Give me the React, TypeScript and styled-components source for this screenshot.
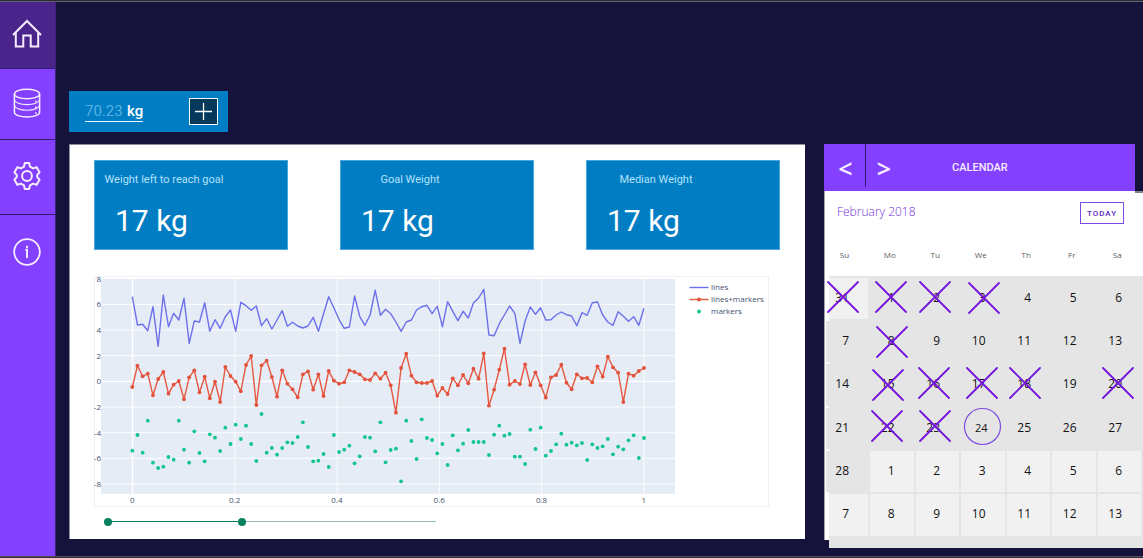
import React, { useState } from "react";
import styled, { createGlobalStyle } from "styled-components";

const GlobalStyle = createGlobalStyle`
  * { box-sizing: border-box; }
  body { margin: 0; background: #15133c; font-family: Roboto, sans-serif; }
  button, input { font-family: inherit; }
`;

const Page = styled.div`
  display: flex;
  min-height: 100vh;
  background: #15133c;
  border-top: 1px solid #2b2935;
  border-bottom: 1px solid #2b2935;
  overflow-x: hidden;
`;

const Sidebar = styled.nav`
  flex: none;
  width: 56px;
  background: #8440ff;
  border-top: 1px solid #66646f;
  border-bottom: 1px solid #55535e;
  border-right: 1px solid #3c2379;
`;

const NavButton = styled.button<{ $height: number; $active?: boolean }>`
  display: flex;
  align-items: center;
  justify-content: center;
  width: 100%;
  height: ${(p) => p.$height}px;
  padding: 0 2px 2px 0;
  border: 0;
  border-bottom: 1px solid ${(p) => (p.$height > 75 ? "transparent" : "#351a73")};
  background: ${(p) => (p.$active ? "#48248b" : "transparent")};
  color: #f8edff;
`;

const Content = styled.main`
  flex: 1;
  min-width: 0;
  border-top: 1px solid #66646f;
  border-bottom: 1px solid #55535e;
  padding: 89px 0 8px 13px;
`;

const EntryBar = styled.form`
  display: flex;
  align-items: center;
  justify-content: space-between;
  width: 159px;
  height: 41px;
  padding: 0 10px 0 16px;
  background: #007dc3;
`;

const WeightField = styled.label`
  display: flex;
  gap: 4px;
  width: 58px;
  border-bottom: 1px solid #e6f6ff;
  color: #fff;
  font-size: 15px;
  font-weight: 500;
  line-height: 20px;
`;

const WeightInput = styled.input`
  width: 38px;
  height: 20px;
  padding: 0;
  border: 0;
  background: transparent;
  color: #fff;
  font-size: 15px;
  &::placeholder { color: #55b1e4; opacity: 1; }
`;

const AddButton = styled.button`
  display: flex;
  align-items: center;
  justify-content: center;
  width: 29px;
  height: 27px;
  padding: 0;
  border: 1px solid #f2fbff;
  background: #04395b;
  color: #fff;
`;

const Columns = styled.div`
  display: flex;
  align-items: flex-start;
  gap: 19px;
  margin-top: 12px;
`;

const Dashboard = styled.section`
  flex: 1;
  min-width: 0;
  padding: 15px 25px 10px 24px;
  border-top: 1px solid #8f8d9b;
  border-left: 1px solid #8f8d9b;
  background: #fff;
`;

const Cards = styled.div`
  display: grid;
  grid-template-columns: repeat(3, 1fr);
  gap: 52px;
`;

const Card = styled.div`
  height: 90px;
  padding-top: 11px;
  border: 1px solid #4aa6dc;
  background: #007dc3;
`;

const CardTitle = styled.div`
  width: 138px;
  color: #b4e1fc;
  font-size: 11px;
  line-height: 16px;
  text-align: center;
`;

const CardValue = styled.div`
  padding: 15px 0 0 20px;
  color: #fff;
  font-size: 30px;
  line-height: 36px;
`;

const ChartFrame = styled.div`
  margin: 26px 11px 0 0;
  svg { display: block; width: 100%; height: auto; overflow: visible; }
  text { font-family: "Open Sans", sans-serif; font-size: 8px; fill: #44526f; }
`;

const RangeSlider = styled.div`
  position: relative;
  width: 336px;
  height: 14px;
  margin: 8px 0 0 10px;
`;

const Track = styled.div`
  position: absolute;
  top: 6px;
  right: 4px;
  left: 4px;
  height: 1px;
  background: #95bdb5;
`;

const TrackFill = styled.div`
  height: 1px;
  background: #0a7c5f;
`;

const RangeInput = styled.input`
  position: absolute;
  inset: 0;
  width: 100%;
  height: 14px;
  margin: 0;
  appearance: none;
  background: transparent;
  pointer-events: none;
  &::-webkit-slider-thumb {
    appearance: none;
    width: 8px;
    height: 8px;
    border-radius: 50%;
    background: #06805f;
    pointer-events: auto;
  }
`;

const Calendar = styled.section`
  flex: none;
  width: 319px;
`;

const CalendarHeader = styled.header`
  display: flex;
  width: 311px;
  height: 47px;
  background: #8440ff;
`;

const StepButton = styled.button<{ $divided?: boolean }>`
  width: ${(p) => (p.$divided ? 42 : 36)}px;
  height: 43px;
  padding: ${(p) => (p.$divided ? "4px 0 0 2px" : "4px 0 0")};
  border: 0;
  border-right: ${(p) => (p.$divided ? "1px solid #35176f" : "0")};
  background: transparent;
  color: #f8edff;
  font-family: "Open Sans", sans-serif;
  font-size: 25px;
  font-weight: 600;
  line-height: 36px;
`;

const CalendarTitle = styled.h2`
  margin: 0 0 0 50px;
  color: #f8edff;
  font-size: 11px;
  font-weight: 500;
  line-height: 48px;
`;

const CalendarBody = styled.div`
  position: relative;
  display: flow-root;
  border-left: 1px solid #a3a1ad;
  background: #fff;
  &::after {
    content: "";
    position: absolute;
    top: 0;
    right: 0;
    width: 8px;
    height: 2px;
    background: #85828f;
  }
`;

const MonthRow = styled.div`
  display: flex;
  align-items: center;
  justify-content: space-between;
  height: 44px;
  padding: 0 19px 0 12px;
`;

const Month = styled.h3`
  margin: 0 0 3px;
  color: #7230dc;
  font-family: "Open Sans", sans-serif;
  font-size: 12px;
  font-weight: 300;
`;

const TodayButton = styled.button`
  width: 44px;
  height: 22px;
  padding: 0;
  border: 1px solid #7c4be6;
  background: #fff;
  color: #5a1fc0;
  font-size: 8px;
  font-weight: 500;
  letter-spacing: 1px;
`;

const GridWrap = styled.div`
  position: relative;
  margin: 0 0 -8px 4px;
  padding-bottom: 12px;
  background: #e5e5e5;
`;

const Grid = styled.table`
  width: 100%;
  table-layout: fixed;
  border-collapse: separate;
  border-spacing: 0;
  font-family: "Open Sans", sans-serif;
`;

const Weekday = styled.th`
  height: 41px;
  padding: 0 6px 2px 0;
  background: #fff;
  color: #5a5a5a;
  font-size: 8px;
  font-weight: 400;
  text-align: center;
  &:first-child { width: 41px; padding-right: 10px; }
`;

const Week = styled.tr`
  height: 43px;
  &:nth-child(3n) { height: 44px; }
`;

const Day = styled.td<{ $light?: boolean; $wide?: boolean; $current?: boolean }>`
  position: relative;
  padding: 0 ${(p) => (p.$current ? 17 : 19)}px 2px 0;
  border-top: 2px solid #e5e5e5;
  border-right: 2px solid #e5e5e5;
  background: ${(p) => (p.$light ? "#f1f1f1" : "#e5e5e5")};
  color: #111;
  font-size: ${(p) => (p.$current ? 11 : 12)}px;
  line-height: 16px;
  text-align: right;
  &::before {
    content: "";
    display: ${(p) => (p.$wide ? "block" : "none")};
    position: absolute;
    top: 0;
    bottom: 0;
    left: -3px;
    width: 3px;
    background: #e5e5e5;
  }
`;

const Marks = styled.svg`
  position: absolute;
  top: 41px;
  left: 0;
  overflow: visible;
  pointer-events: none;
`;

const LINES = [
  95, 180, 178, 197, 125, 244, 90, 185, 145, 165, 100, 235, 168, 171, 113, 199, 164, 190, 155, 135,
  199, 112, 122, 136, 123, 182, 161, 192, 165, 137, 184, 172, 183, 189, 183, 157, 199, 147, 95, 129,
  163, 190, 186, 93, 154, 181, 150, 76, 151, 133, 146, 171, 199, 171, 165, 135, 125, 121, 146, 124,
  185, 110, 139, 167, 139, 159, 114, 99, 73, 210, 212, 176, 150, 123, 145, 235, 168, 126, 148, 128,
  165, 164, 150, 141, 149, 153, 182, 143, 151, 113, 111, 150, 171, 181, 140, 154, 169, 155, 181, 130,
];
const LINES_MARKERS = [
  366, 302, 334, 326, 391, 342, 321, 386, 359, 348, 403, 337, 316, 382, 335, 400, 350, 411, 306, 333,
  350, 379, 300, 273, 420, 301, 287, 336, 395, 316, 356, 373, 397, 328, 319, 374, 328, 393, 318, 347,
  356, 352, 316, 321, 328, 343, 345, 325, 341, 323, 361, 443, 309, 266, 332, 352, 354, 354, 348, 392,
  369, 387, 340, 361, 330, 355, 311, 341, 265, 422, 374, 314, 251, 359, 348, 357, 298, 360, 322, 361,
  398, 337, 330, 299, 353, 373, 328, 340, 339, 352, 304, 335, 275, 307, 323, 411, 326, 332, 318, 309,
];
const MARKERS = [
  152, 105, 158, 62, 188, 204, 200, 171, 179, 62, 149, 188, 94, 159, 184, 103, 113, 153, 83, 132,
  74, 117, 77, 132, 183, 42, 158, 144, 164, 144, 127, 129, 111, 67, 141, 184, 182, 162, 201, 105,
  156, 149, 137, 190, 169, 111, 113, 154, 67, 187, 150, 146, 244, 62, 123, 177, 58, 114, 120, 160,
  132, 195, 106, 151, 131, 90, 126, 126, 126, 165, 104, 77, 107, 102, 170, 170, 192, 89, 147, 83,
  167, 153, 133, 101, 134, 128, 136, 129, 180, 133, 144, 139, 117, 163, 140, 148, 121, 106, 174, 114,
].map((v) => v + 405);

const px = (i: number) => 38.3 + (i * 511.7) / 99;
const py = (v: number) => v / 3 - 11;
const points = (data: number[]) => data.map((v, i) => `${px(i).toFixed(1)},${py(v).toFixed(1)}`).join(" ");

function Chart() {
  return (
    <svg viewBox="0 0 675 231" role="img" aria-label="Weight over time">
      <rect x="0.5" y="0.5" width="674" height="230" fill="#fff" stroke="#f0f1f4" />
      <rect x="7" y="3" width="574" height="215" fill="#e5ecf6" />
      {[0, 1, 2, 3, 4, 5].map((k) => (
        <g key={k}>
          <path d={`M${38.5 + k * 102.3} 3v215`} stroke="#fff" strokeWidth={k === 0 ? 1.4 : 0.9} />
          <text x={38.3 + k * 102.3} y="227" textAnchor="middle">
            {k === 0 ? "0" : k === 5 ? "1" : `0.${k * 2}`}
          </text>
        </g>
      ))}
      {[8, 6, 4, 2, 0, -2, -4, -6, -8].map((v) => (
        <g key={v}>
          {v !== 8 && (
            <path d={`M7 ${105.4 - v * 12.82}h574`} stroke="#fff" strokeWidth={v === 0 ? 1.4 : 0.9} />
          )}
          <text x="7" y={108.4 - v * 12.82} textAnchor="end">{v}</text>
        </g>
      ))}
      <polyline points={points(LINES)} fill="none" stroke="#6c70ea" strokeWidth="1.4" strokeLinejoin="round" />
      <polyline points={points(LINES_MARKERS)} fill="none" stroke="#e8573f" strokeWidth="1.4" strokeLinejoin="round" />
      {LINES_MARKERS.map((v, i) => <circle key={i} cx={px(i)} cy={py(v)} r="1.9" fill="#e2523c" />)}
      {MARKERS.map((v, i) => <circle key={i} cx={px(i)} cy={py(v)} r="1.9" fill="#12c490" />)}
      <path d="M595.5 11.5h19" stroke="#6c70ea" strokeWidth="1.4" />
      <path d="M595.5 23.5h19" stroke="#e8573f" strokeWidth="1.4" />
      <circle cx="605" cy="23.5" r="1.9" fill="#e2523c" />
      <circle cx="605" cy="35.5" r="1.9" fill="#12c490" />
      <text x="617" y="14">lines</text>
      <text x="617" y="26">lines+markers</text>
      <text x="617" y="38">markers</text>
    </svg>
  );
}

const HomeIcon = () => (
  <svg width="30" height="30" viewBox="0 0 30 30" fill="none" stroke="currentColor" strokeWidth="2">
    <path d="M1 16L15 2L29 16" />
    <path d="M3.8 14V27.6H11.3V16.6H18.7V27.6H26.2V14" />
  </svg>
);

const DatabaseIcon = () => (
  <svg width="28" height="30" viewBox="0 0 28 30" fill="none" stroke="currentColor" strokeWidth="1.5">
    <ellipse cx="14" cy="6" rx="12.6" ry="4.8" />
    <path d="M1.4 6V24.2C1.4 27 7 29 14 29S26.6 27 26.6 24.2V6" />
    <path d="M1.4 12C3 15 8 16.6 14 16.6S25 15 26.6 12M1.4 17.6C3 20.8 8 22.3 14 22.3S25 20.8 26.6 17.6" strokeWidth="1.1" />
    <path d="M22 13.6h1.6M22 19.3h1.6M22 25h1.6" strokeWidth="1.5" />
  </svg>
);

const GearIcon = () => (
  <svg width="28" height="28" viewBox="0 0 28 28" fill="none" stroke="currentColor" strokeWidth="2" strokeLinejoin="round">
    <path d="M11.8 1H16.2L17 4.7L20 6.4L23.7 5.3L26.6 10.4L24.2 13V15L26.6 17.6L23.7 22.7L20 21.6L17 23.3L16.2 27H11.8L11 23.3L8 21.6L4.3 22.7L1.4 17.6L3.8 15V13L1.4 10.4L4.3 5.3L8 6.4L11 4.7Z" />
    <circle cx="14" cy="14" r="4.9" />
  </svg>
);

const InfoIcon = () => (
  <svg width="28" height="28" viewBox="0 0 28 28" fill="none" stroke="currentColor" strokeWidth="1.8">
    <circle cx="14" cy="14" r="12.8" />
    <path d="M12.4 11.7H14V20M14 7.8V10" strokeWidth="1.9" />
  </svg>
);

const WEEKDAYS = ["Su", "Mo", "Tu", "We", "Th", "Fr", "Sa"];
const WEEKS = [
  [31, 1, 2, 3, 4, 5, 6],
  [7, 8, 9, 10, 11, 12, 13],
  [14, 15, 16, 17, 18, 19, 20],
  [21, 22, 23, 24, 25, 26, 27],
  [28, 1, 2, 3, 4, 5, 6],
  [7, 8, 9, 10, 11, 12, 13],
];
const isOutside = (w: number, d: number) => (w === 0 && d === 0) || (w === 4 && d > 0) || w === 5;

/* Centres of the hand-drawn crosses on the month grid. */
const CROSSES = [
  [14, 21], [62, 21], [106, 21], [155, 22], [63, 66], [59, 109], [105, 107],
  [153, 107], [196, 107], [289, 107], [58, 150], [106, 150],
];

export default function App() {
  const [from, setFrom] = useState(0);
  const [to, setTo] = useState(41);
  return (
    <>
      <GlobalStyle />
      <Page>
        <Sidebar aria-label="Main">
          <NavButton $height={67} $active aria-label="Home"><HomeIcon /></NavButton>
          <NavButton $height={71} aria-label="Data"><DatabaseIcon /></NavButton>
          <NavButton $height={75} aria-label="Settings"><GearIcon /></NavButton>
          <NavButton $height={76} aria-label="About"><InfoIcon /></NavButton>
        </Sidebar>
        <Content>
          <EntryBar onSubmit={(e) => e.preventDefault()}>
            <WeightField>
              <WeightInput placeholder="70.23" aria-label="Weight in kg" />
              kg
            </WeightField>
            <AddButton aria-label="Add weight">
              <svg width="17" height="17" viewBox="0 0 17 17" stroke="currentColor" strokeWidth="1.3">
                <path d="M8.5 0V17M0 8.5H17" />
              </svg>
            </AddButton>
          </EntryBar>
          <Columns>
            <Dashboard>
              <Cards>
                {["Weight left to reach goal", "Goal Weight", "Median Weight"].map((title) => (
                  <Card key={title}>
                    <CardTitle>{title}</CardTitle>
                    <CardValue>17 kg</CardValue>
                  </Card>
                ))}
              </Cards>
              <ChartFrame><Chart /></ChartFrame>
              <RangeSlider>
                <Track>
                  <TrackFill style={{ marginLeft: `${from}%`, width: `${to - from}%` }} />
                </Track>
                <RangeInput type="range" aria-label="Range start" value={from}
                  onChange={(e) => setFrom(Math.min(+e.target.value, to))} />
                <RangeInput type="range" aria-label="Range end" value={to}
                  onChange={(e) => setTo(Math.max(+e.target.value, from))} />
              </RangeSlider>
            </Dashboard>
            <Calendar>
              <CalendarHeader>
                <StepButton $divided aria-label="Previous month">&lt;</StepButton>
                <StepButton aria-label="Next month">&gt;</StepButton>
                <CalendarTitle>CALENDAR</CalendarTitle>
              </CalendarHeader>
              <CalendarBody>
                <MonthRow>
                  <Month>February 2018</Month>
                  <TodayButton>TODAY</TodayButton>
                </MonthRow>
                <GridWrap>
                  <Grid>
                    <thead>
                      <tr>{WEEKDAYS.map((d) => <Weekday key={d} scope="col">{d}</Weekday>)}</tr>
                    </thead>
                    <tbody>
                      {WEEKS.map((week, w) => (
                        <Week key={w}>
                          {week.map((day, d) => (
                            <Day key={d} $light={isOutside(w, d)} $wide={d === 0 && w > 0 && w < 5} $current={day === 24}>
                              {day}
                            </Day>
                          ))}
                        </Week>
                      ))}
                    </tbody>
                  </Grid>
                  <Marks width="314" height="260" viewBox="0 0 314 260" fill="none" aria-hidden="true">
                    {CROSSES.map(([x, y]) => (
                      <path key={`${x}-${y}`} d={`M${x - 15} ${y - 15}l30 30m0 -30l-30 30`} stroke="#7414dc" strokeWidth="1.8" strokeLinecap="round" />
                    ))}
                    <circle cx="153.5" cy="150.5" r="18" stroke="#7b4ee0" strokeWidth="1.2" />
                  </Marks>
                </GridWrap>
              </CalendarBody>
            </Calendar>
          </Columns>
        </Content>
      </Page>
    </>
  );
}
